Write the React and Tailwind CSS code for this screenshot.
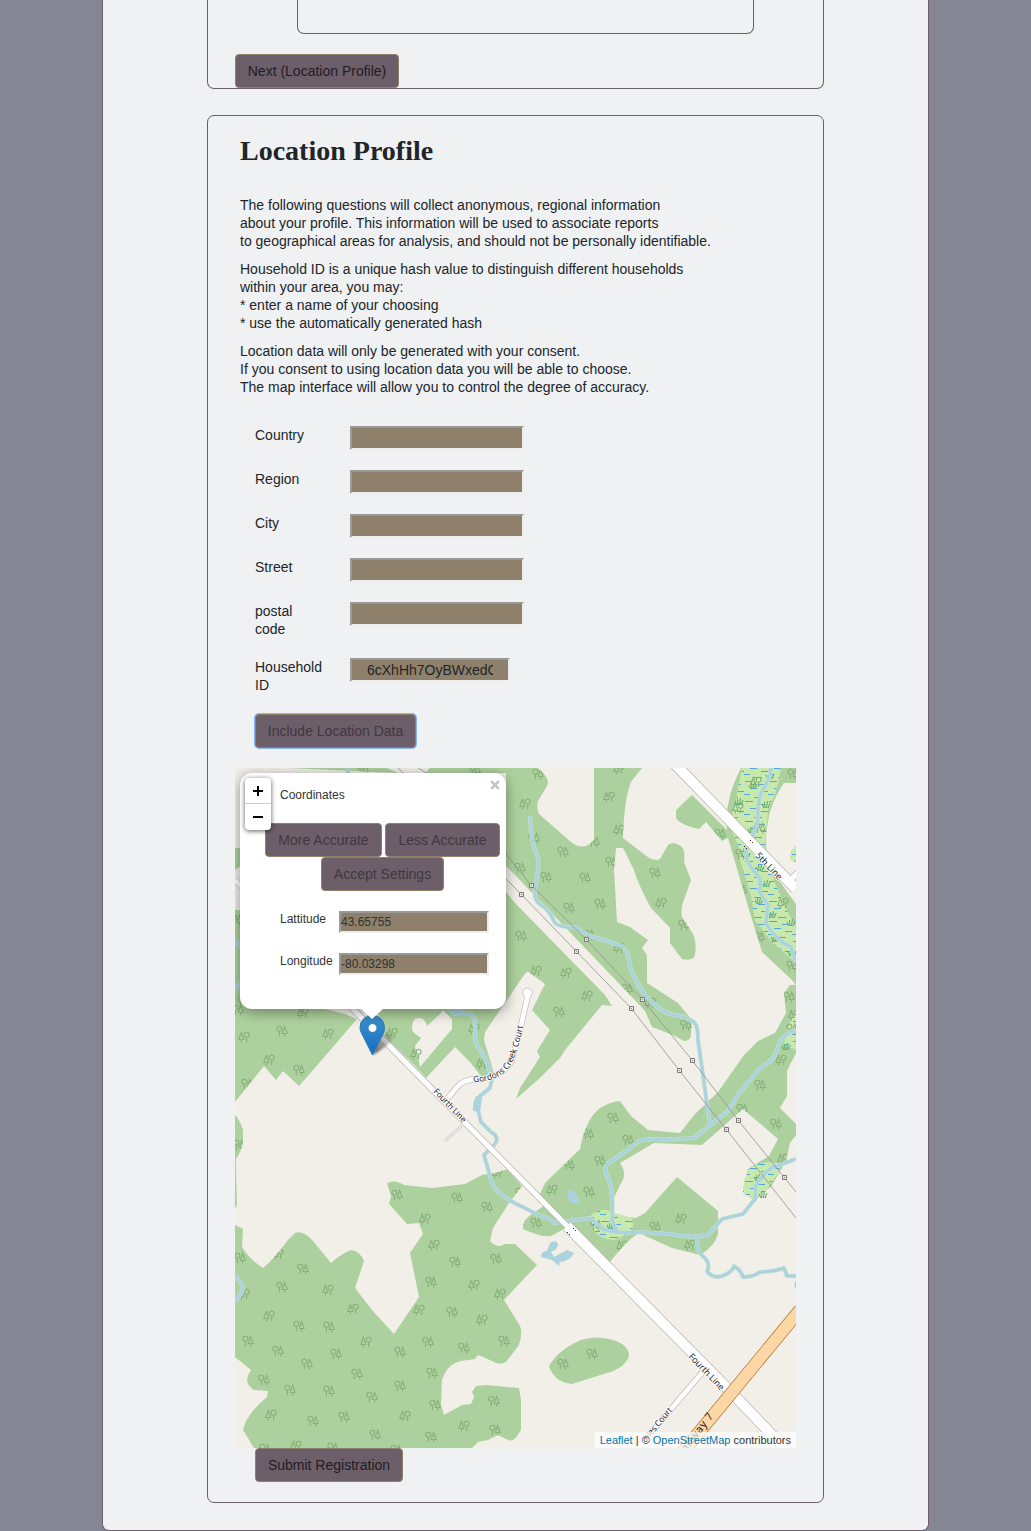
import React from "react";

const forests = [
  // north, left of the utility corridor
  "M289 768H387L398 773H506V866L515 875L630 995L645 1011L652 1027Q665 1032 675 1036L684 1041Q691 1041 691 1034L692 1020L678 1003L647 983V955L642 948L648 940L630 927L617 922L614 870L616 848H623L634 870Q637 882 651 908L670 928V943L682 959Q688 961 694 958Q698 945 693 934L682 917Q680 907 685 897L691 880L684 862Q686 848 679 845Q672 841 668 845L660 859Q654 862 645 855L623 838Q624 800 631 782L642 768H594V840Q583 852 571 842L539 814Q536 808 538 801L547 786Q551 779 538 768H430L425 773H398Z",
  "M500 885L515 903L605 995L612 1006L602 1005L565 1050L560 1058L540 1078L516 1099L520 1088L540 1057L537 1051L550 1030L532 1010L545 984L530 973Q527 970 524 975L505 1003L485 1032L484 1040L490 1060L494 1074L486 1077L480 1075L470 1062L455 1047L426 1078L415 1066L386 1038L375 1005H500Z",
  "M235 848H242V865L235 870Z",
  "M235 910H350L340 1008L345 1013L357 1019L320 1062L299 1086L283 1071L276 1080L264 1066L235 1102Z",
  "M235 1115Q240 1120 243 1130V1142Q242 1150 236 1159V1170L237 1205L235 1209Z",
  "M235 1225L243 1229L242 1247Q250 1260 263 1268Q275 1258 287 1241L295 1233Q303 1230 313 1241L331 1263Q341 1254 351 1250Q360 1251 364 1261L355 1288L372 1310L394 1334L419 1297L410 1253L423 1234L419 1223L407 1224L389 1204L391 1196L387 1183Q395 1179 404 1185L432 1188L465 1184L482 1175L495 1173L508 1169L522 1186L509 1203L493 1228L490 1241Q497 1249 505 1244L515 1244L537 1265L504 1300L520 1326Q523 1332 519 1345L506 1362Q500 1366 492 1361L478 1355L475 1359L461 1361Q447 1364 442 1380L441 1405L444 1415L462 1405L471 1404L474 1397L472 1392L476 1386L487 1385L519 1388L521 1400V1430Q514 1443 508 1440L498 1435L488 1440L478 1442L472 1448H254L243 1430Q247 1413 267 1397L268 1391L254 1390Q242 1383 251 1370L235 1357Z",
  "M523 1225Q524 1218 538 1210L545 1205L566 1228L551 1236Q543 1238 523 1229Z",
  "M539 1196L545 1183L580 1149Q585 1120 600 1108Q610 1102 620 1101L631 1116L648 1130L680 1133L694 1115L718 1092L744 1055L758 1041L775 1033L786 1013L784 993L790 985H796V1053L787 1071V1096L780 1108L796 1124V1135L790 1143L786 1161L771 1187L752 1199L743 1190L748 1169L769 1156L778 1139L743 1109L702 1145L654 1143L620 1163Q628 1174 620 1185L613 1200V1215L636 1218L645 1213L677 1177L718 1211V1234Q715 1246 700 1255L672 1248L639 1233Q627 1240 610 1262L568 1223Z",
  "M549 1366Q558 1350 581 1340Q597 1335 613 1340Q629 1345 629 1356Q625 1368 607 1373L572 1384Q554 1382 549 1366Z",
  "M741 768H796V783H784Q775 796 769 815L766 845L770 868L796 904V985L792 980L762 952L750 913L728 838L722 841L706 822L699 829Q680 825 676 818L676 810L692 795L727 830Q724 800 741 768Z",
];

const clearings = [
  "M415 1019Q424 1015 427 1026L440 1014L443 1010L452 1019V1029L420 1067L418 1057L415 1046L421 1038L413 1032Q410 1024 415 1019Z",
  "M325 1009H350L357 1019L345 1014Z",
  "M235 768H289V773H235Z",
  "M784 783H796V890L770 858L766 838Q768 806 784 783Z",
];

const wetlands = [
  "M742 768H781Q777 795 768 810L765 845L771 873L784 905L796 927V963L770 940L755 920L751 896L741 863L738 845L732 832Q730 815 736 800Z",
  "M796 845Q789 852 790 860L796 862Z",
  "M796 1010Q785 1030 784 1045L796 1050Z",
  "M751 1166L767 1162L780 1163L779 1172L765 1192L755 1200L743 1193L744 1180Z",
  "M590 1216Q602 1206 612 1212L632 1218Q636 1228 628 1234L614 1240Q600 1240 593 1229Z",
];

const streams = [
  "M530 816Q531 844 538 858Q539 869 535 889Q533 900 541 905Q549 909 555 923Q562 928 576 927Q587 936 597 938L622 946Q628 950 630 966Q637 987 648 998Q664 1016 682 1016L694 1022Q698 1026 698 1040L710 1125",
  "M796 1030Q780 1035 777 1050Q775 1060 760 1068L738 1095L727 1112L710 1125L694 1138Q670 1140 648 1139Q637 1140 628 1150L608 1163Q603 1168 608 1178Q614 1190 612 1220L617 1231",
  "M450 1010L456 1014Q470 1010 475 1020V1035Q474 1042 482 1053Q487 1060 492 1079L490 1088L480 1096L478 1110L481 1122L491 1132Q500 1137 495 1144L484 1155L493 1186Q503 1199 525 1208L540 1216Q548 1216 554 1223L590 1218L603 1229Q615 1234 642 1232L670 1234Q690 1238 708 1235L722 1219Q734 1216 743 1214L755 1199L756 1185Q763 1174 771 1168L796 1159",
  "M697 1237Q696 1252 704 1257Q711 1265 707 1271Q713 1280 725 1275Q733 1271 734 1266Q741 1270 743 1277Q753 1277 760 1272Q773 1272 784 1268L787 1276L796 1276",
  "M771 768Q770 780 763 789Q757 800 758 820L751 841L746 850Q744 861 758 876Q763 882 759 891L768 905L766 923Q775 940 791 947L796 963",
  "M235 1276Q242 1282 243 1289Q241 1295 235 1301",
  "M349 768L347 774",
  "M235 940L242 948M235 990L242 981",
];

// x, y, mirrored
const trees = [
  [538,774],[619,769,1],[525,804,1],[534,838],[609,797,1],[619,830,1],[594,842],[563,852],[520,868],[546,877],[585,878],[611,862],[655,873],[661,903,1],[569,908],[600,904],[589,935],[521,936],[619,948,1],[536,971,1],[566,973,1],[627,989],[684,925],[720,834],[741,890],[783,903,1],[793,774],[792,966],[759,937],[741,854],[760,828],[756,782,1],[738,808,1],
  [587,996,1],[559,1012],[650,1003,1],[686,1025],[789,997],[792,1029],[781,1060,1],[760,1085],[742,1109],[776,1124],[783,1159,1],[613,1118],[588,1134],[628,1140],[600,1161],[569,1165],[552,1190,1],[589,1192],[521,1193],[497,1173,1],
  [536,1223],[596,1225],[655,1227],[681,1219,1],[690,1245,1],[622,1246,1],[563,1364],[592,1354],
  [244,1037,1],[282,1031],[328,1034,1],[303,1013,1],[392,1033,1],[269,1060,1],[299,1070],[247,1084],[239,1145],[416,1054,1],[474,1029,1],[482,1064,1],[243,1002],
  [397,1195],[457,1198],[487,1207],[425,1219,1],[434,1245,1],[455,1262],[496,1259],[431,1282],[474,1285,1],[500,1294,1],[419,1310,1],[452,1312],[482,1320,1],[504,1341],[464,1348],[428,1342],[400,1352],[432,1373],[400,1386],[435,1405],[405,1416,1],[464,1426,1],[494,1401],[495,1430],[431,1437],[375,1435],[372,1397],[357,1374],[366,1342,1],[336,1354],[307,1364],[329,1391],[290,1390],[264,1380],[278,1351],[248,1341],[299,1326],[329,1327],[269,1316,1],[353,1309,1],[328,1290,1],[282,1287],[303,1269],[240,1258],[244,1294,1],[278,1254,1],[271,1415,1],[313,1421],[344,1417],[265,1449],[296,1446,1],[333,1448],[396,1450],
  [363,769],[475,770],[237,920],[238,1010],[794,1015,1],
];

const reeds = [[770,776],[753,786],[739,802],[766,805],[752,830],[746,855],[760,868],[766,884],[759,901],[772,915],[791,923],[792,953],[775,938],[786,1047],[758,1178],[763,1195],[611,1226]];
const towers = [[531,885],[521,894],[586,939],[576,951],[642,999],[631,1008],[692,1060],[679,1070],[738,1120],[726,1129],[784,1177]];

function MapCanvas() {
  return (
    <svg className="block h-full w-full" viewBox="235 768 561 680" fontFamily="'Noto Sans', sans-serif">
      <defs>
        <g id="woods" fill="none" stroke="#87b07a" strokeWidth="1.1">
          <circle cx="-2.6" cy="-2.2" r="2.5" />
          <path d="M-2.6 .3V5M2.7 -4.600L.2 2.500H5.200ZM2.700 2.500V5.500" />
        </g>
        <pattern id="marsh" width="24" height="20" patternUnits="userSpaceOnUse">
          <path d="M1 1.500h8M14 4.500h7M6 8.500h7M17 11.500h7M0 14.500h6M10 17.500h8" stroke="#55a6d6" strokeWidth="1" />
        </pattern>
        <clipPath id="wooded">
          {forests.map((d) => <path key={d} d={d} />)}
        </clipPath>
        <linearGradient id="pin" x1="0" y1="0" x2="0" y2="1">
          <stop offset="0" stopColor="#3f8ec9" />
          <stop offset="1" stopColor="#126fc6" />
        </linearGradient>
        <linearGradient id="cast" x1="0" y1="1" x2="1" y2="0">
          <stop offset="0" stopOpacity=".65" />
          <stop offset="1" stopOpacity="0" />
        </linearGradient>
        <filter id="soft"><feGaussianBlur stdDeviation="1" /></filter>
      </defs>
      <path fill="#f2efe9" d="M235 768h561v680h-561z" />
      {forests.map((d) => <path key={d} d={d} fill="#add19e" />)}
      {clearings.map((d) => <path key={d} d={d} fill="#f2efe9" />)}
      {wetlands.map((d) => (
        <g key={d}>
          <path d={d} fill="#c7e9ad" />
          <path d={d} fill="url(#marsh)" />
        </g>
      ))}
      <g clipPath="url(#wooded)">
        {trees.map(([x, y, m], i) => (
          <use key={i} href="#woods" transform={m ? `translate(${x} ${y}) scale(-1 1)` : `translate(${x} ${y})`} />
        ))}
      </g>
      {reeds.map(([x, y]) => (
        <path key={`${x}-${y}`} d={`M${x - 4} ${y - 1}l2 4M${x - 1.5} ${y - 3}l.5 6M${x + 1.5} ${y - 4}l-1 7M${x + 4} ${y - 2}l-2 5`} stroke="#63ae70" strokeWidth="1.1" />
      ))}
      <g fill="none" strokeLinejoin="round">
        {streams.map((d) => <path key={d} d={d} stroke="#c5e2d0" strokeWidth="4.2" />)}
        {streams.map((d) => <path key={d} d={d} stroke="#aad3df" strokeWidth="3" />)}
      </g>
      <g fill="#aad3df">
        <path d="M476 1096L482 1097L480 1112L473 1111Q472 1104 476 1096Z" />
        <path d="M568 1190Q578 1190 579 1201Q573 1207 568 1199Z" />
        <path d="M550 1243Q556 1239 558 1244Q558 1249 551 1252L554 1257L567 1250L574 1253Q570 1261 560 1262L559 1266L552 1260L541 1257Q541 1251 547 1251Z" />
        <path d="M796 1280Q793 1285 796 1289Z" />
        <path d="M444 1007H462L463 1011Q456 1016 449 1011Z" />
      </g>
      <g fill="none" stroke="#929292" strokeWidth=".8">
        <path d="M506 854L531 885L586 939L642 999L692 1060L738 1120L796 1192" />
        <path d="M500 873L521 894L576 951L631 1008L679 1070L726 1129L796 1218" />
        <path d="M398 768L404 774M418 768L428 774" />
      </g>
      {towers.map(([x, y]) => (
        <g key={`${x}-${y}`}>
          <path d={`M${x - 1.5} ${y - 1.5}h4v4h-4z`} fill="#f2efe9" stroke="#777" />
          <circle cx={x + 0.5} cy={y + 0.5} r=".7" fill="#888" />
        </g>
      ))}
      <g fill="none" stroke="#b7b5b1">
        <path d="M445 1141L466 1122" stroke="#c8c6c2" strokeWidth="3" />
        <path d="M345 1001L505 1163L567 1226" strokeWidth="6.6" />
        <path d="M567 1226L728 1389L796 1460" strokeWidth="11.4" />
        <path d="M673 762L796 889" strokeWidth="11.5" />
        <path d="M448 1098L457 1087Q464 1079 477 1079Q500 1079 511 1062Q518 1042 528 994" strokeWidth="6" />
        <path d="M706 1368L638 1448" strokeWidth="6" />
        <path d="M788 882L800 871" strokeWidth="7" />
        <path d="M235 880L242 887" strokeWidth="6" />
      </g>
      <circle cx="527.5" cy="993" r="4.8" fill="#fff" stroke="#b7b5b1" strokeWidth=".7" />
      <g fill="none" stroke="#fff">
        <path d="M445 1141L466 1122" stroke="#f0efec" strokeWidth="1.5" />
        <path d="M345 1001L505 1163L567 1226" strokeWidth="5.2" />
        <path d="M567 1226L728 1389L796 1460" strokeWidth="10" />
        <path d="M673 762L796 889" strokeWidth="10" />
        <path d="M448 1098L457 1087Q464 1079 477 1079Q500 1079 511 1062Q518 1042 528 994" strokeWidth="4.8" />
        <path d="M706 1368L638 1448" strokeWidth="4.8" />
        <path d="M788 882L800 871" strokeWidth="5.5" />
        <path d="M235 880L242 887" strokeWidth="4.8" />
      </g>
      <path d="M567 1232l3 3M573 1228l3 3M744 846l3 3M750 840l3 3" stroke="#222" strokeDasharray="1.5 1.5" />
      <path d="M682 1453L800 1310" stroke="#ad7627" strokeWidth="13" />
      <path d="M682 1453L800 1310" stroke="#fcd6a4" strokeWidth="11.500" />
      <g fill="#222" stroke="#fff" strokeWidth="1.6" paintOrder="stroke" strokeLinejoin="round" fontSize="8.5">
        <path id="court-path" d="M473 1082Q501 1082 512 1063Q520 1045 523 1026" fill="none" stroke="none" />
        <text transform="translate(433 1092) rotate(46)" textLength="43" lengthAdjust="spacingAndGlyphs">Fourth Line</text>
        <text><textPath href="#court-path">Gordons Creek Court</textPath></text>
        <text transform="translate(755 856) rotate(46)" fontSize="9" textLength="34">5th Line</text>
        <text transform="translate(688 1357) rotate(46)" fontSize="9" textLength="47">Fourth Line</text>
        <text transform="translate(647 1441) rotate(-50)" textLength="40">oles Court</text>
        <text transform="translate(686 1453) rotate(-53)" fontSize="11" stroke="#fcd6a4" textLength="46">ghway 7</text>
      </g>
      <path d="M373 1055L379 1036Q386 1029 394 1034Q396 1041 373 1055Z" fill="url(#cast)" filter="url(#soft)" />
      <path d="M372.5 1055L362 1034Q360 1031 360 1027.500A12.200 12.200 0 0 1 384.500 1027.500Q384.500 1031 383 1034Z" fill="url(#pin)" stroke="#2c78b0" strokeWidth="1" />
      <circle cx="372.500" cy="1028" r="4.300" fill="#fff" stroke="#287bb8" strokeWidth=".6" />
    </svg>
  );
}

function Button({ className = "", muted = false, children }) {
  return (
    <button className={`block h-[34px] shrink-0 whitespace-nowrap rounded-[4px] border border-[#8e806a] bg-[#6d5f6a] text-center text-[14px] leading-5 ${muted ? "text-[#41373f]" : "text-[#211d21]"} ${className}`}>
      {children}
    </button>
  );
}

const inset = "border-2 border-t-[#999] border-l-[#999] border-r-[#eee] border-b-[#eee] bg-[#8e806a] rounded-none outline-none";

function Field({ label, tall = false, value }) {
  return (
    <div className={`flex items-start ${tall ? "h-[56px]" : "h-[44px]"}`}>
      <label className="w-[95px] pr-[26px] leading-[18px]">{label}</label>
      <input readOnly value={value || ""} className={`${inset} h-6 ${value ? "w-[160px] px-[15px]" : "w-[174px]"} text-[14px]`} />
    </div>
  );
}

function Popup() {
  return (
    <div className="absolute left-[5px] top-[5px] h-[236px] w-[266px] rounded-[12px] bg-white text-[12px] text-[#333] shadow-[0_3px_14px_rgba(0,0,0,0.4)]">
      <svg className="absolute left-[120px] top-[235px] h-[12px] w-[24px]" viewBox="0 0 24 12"><path d="M0 0H24L12 11Z" fill="#fff" /></svg>
      <svg className="absolute right-[6px] top-[7px] h-[10px] w-[10px]" viewBox="0 0 10 10"><path d="M1.200 1.200L8.800 8.800M8.800 1.200L1.200 8.800" stroke="#c3c3c3" strokeWidth="2.500" /></svg>
      <p className="pl-[40px] pt-[13px] leading-[18px]">Coordinates</p>
      <div className="mt-[19px] flex gap-[3px] pl-[25px]">
        <Button muted className="w-[117px]">More Accurate</Button>
        <Button muted className="w-[115px]">Less Accurate</Button>
      </div>
      <Button muted className="ml-[81px] w-[123px]">Accept Settings</Button>
      <div className="mt-[19px] flex h-[42px] items-start pl-[40px]">
        <label className="w-[59px] leading-[18px]">Lattitude</label>
        <input readOnly value="43.65755" className={`${inset} mt-px h-[22px] w-[150px] text-[12px]`} />
      </div>
      <div className="flex items-start pl-[40px]">
        <label className="w-[59px] leading-[18px]">Longitude</label>
        <input readOnly value="-80.03298" className={`${inset} mt-px h-[22px] w-[150px] text-[12px]`} />
      </div>
    </div>
  );
}

export default function App() {
  return (
    <div className="h-[1531px] w-[1031px] overflow-hidden bg-[#848694] pl-[102px] font-['Liberation_Sans',Arial,sans-serif] text-[14px] text-[#212529]">
      <main className="h-[1531px] w-[827px] rounded-b-[7px] border-x border-b border-[#6d5f6a] bg-[#eff1f3] pl-[104px]">
        <section className="h-[89px] w-[617px] rounded-b-[7px] border-x border-b border-[#6d5f6a]">
          <div className="ml-[89px] h-[34px] w-[457px] rounded-b-[7px] border-x border-b border-[#6d5f6a]" />
          <Button className="ml-[27px] mt-[20px] w-[164px]">Next (Location Profile)</Button>
        </section>
        <section className="mt-[26px] h-[1388px] w-[617px] rounded-[7px] border border-[#6d5f6a]">
          <div className="h-[652px] pl-[32px] pt-[18px]">
            <h2 className="h-[62px] font-['Liberation_Serif',serif] text-[28px] font-bold leading-[34px]">Location Profile</h2>
            <div className="flex flex-col gap-[10px] leading-[18px]">
              <p>The following questions will collect anonymous, regional information<br />about your profile. This information will be used to associate reports<br />to geographical areas for analysis, and should not be personally identifiable.</p>
              <p>Household ID is a unique hash value to distinguish different households<br />within your area, you may:<br />* enter a name of your choosing<br />* use the automatically generated hash</p>
              <p>Location data will only be generated with your consent.<br />If you consent to using location data you will be able to choose.<br />The map interface will allow you to control the degree of accuracy.</p>
            </div>
            <div className="ml-[15px] mt-[30px]">
              <Field label="Country" />
              <Field label="Region" />
              <Field label="City" />
              <Field label="Street" />
              <Field label="postal code" tall />
              <Field label="Household ID" tall value="6cXhHh7OyBWxedC8f2" />
              <Button muted className="w-[161px] shadow-[0_0_0_1px_#8ab4f2]">Include Location Data</Button>
            </div>
          </div>
          <div className="relative ml-[27px] h-[680px] w-[561px] overflow-hidden">
            <MapCanvas />
            <Popup />
            <div className="absolute left-[10px] top-[10px] flex h-[52px] w-[26px] flex-col rounded-[4px] bg-white shadow-[0_1px_5px_rgba(0,0,0,0.65)]">
              <div className="flex h-[26px] items-center justify-center border-b border-[#ccc]"><svg width="12" height="12"><path d="M1 6H11M6 1V11" stroke="#000" strokeWidth="2" /></svg></div>
              <div className="flex h-[26px] items-center justify-center"><svg width="12" height="12"><path d="M1 6H11" stroke="#000" strokeWidth="2" /></svg></div>
            </div>
            <div className="absolute bottom-0 right-0 h-4 whitespace-nowrap bg-white/70 px-[5px] text-[11px] leading-4 text-[#333]">
              <span className="text-[#0078a8]">Leaflet</span> | © <span className="text-[#0078a8]">OpenStreetMap</span> contributors
            </div>
          </div>
          <Button className="ml-[47px] w-[148px]">Submit Registration</Button>
        </section>
      </main>
    </div>
  );
}
